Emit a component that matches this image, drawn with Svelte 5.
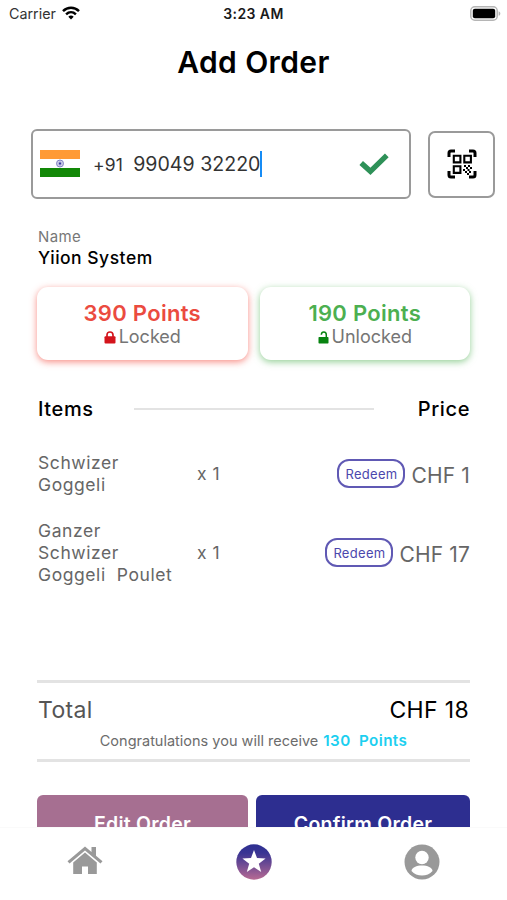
<script lang="ts">
	type OrderItem = {
		lines: string[];
		quantity: number;
		price: number;
	};

	const items: OrderItem[] = [
		{ lines: ['Schwizer', 'Goggeli'], quantity: 1, price: 1 },
		{ lines: ['Ganzer', 'Schwizer', 'Goggeli  Poulet'], quantity: 1, price: 17 }
	];

	const total = items.reduce((sum, item) => sum + item.price * item.quantity, 0);
	const earnedPoints = 130;
	const spokes = Array.from({ length: 12 }, (_, i) => i * 15);
</script>

<div class="screen">
	<header class="status-bar">
		<div class="carrier">
			<span>Carrier</span>
			<svg width="18" height="14" viewBox="0 0 18 14" fill="none" stroke="#000" stroke-width="2.5">
				<path d="M1 5.1C5.6.6 12.4.6 17 5.1" />
				<path d="M4.1 8.3c2.9-2.7 6.9-2.7 9.8 0" />
				<path d="M6.3 10.7c1.6-1.5 3.8-1.5 5.4 0L9 13.6z" fill="#000" stroke="none" />
			</svg>
		</div>
		<span class="clock">3:23 AM</span>
		<svg class="battery" width="31" height="15" viewBox="0 0 31 15">
			<rect x=".8" y=".8" width="26.4" height="13.4" rx="4" fill="#fff" stroke="#b5b5b5" stroke-width="1.5" />
			<rect x="2.8" y="2.8" width="22.4" height="9.4" rx="2" fill="#000" />
			<path d="M28.6 5.2c2.3.8 2.3 3.8 0 4.6z" fill="#b5b5b5" />
		</svg>
	</header>

	<main class="content">
		<h1>Add Order</h1>

		<div class="phone-row">
			<div class="phone-input">
				<svg class="flag" width="40" height="27" viewBox="0 0 40 27">
					<rect width="40" height="27" fill="#fff" />
					<rect width="40" height="9" fill="#ff9a35" />
					<rect y="18" width="40" height="9" fill="#128807" />
					<g stroke="#6b6bb8" fill="none">
						<circle cx="20" cy="13.5" r="3.5" stroke-width=".8" />
						{#each spokes as angle}
							<path d="M20 10v7" stroke-width=".25" transform={`rotate(${angle} 20 13.5)`} />
						{/each}
					</g>
					<circle cx="20" cy="13.5" r="1" fill="#33339a" />
				</svg>
				<span class="code">+91</span>
				<span class="number">99049 32220</span>
				<span class="caret"></span>
				<svg class="check" width="30" height="24" viewBox="0 0 30 24">
					<path d="M2.2 11l9.2 8.300L27.800 3.300" fill="none" stroke="#2e9158" stroke-width="5.3" />
				</svg>
			</div>
			<button class="scan" aria-label="Scan QR code">
				<svg width="30" height="30" viewBox="0 0 30 30" fill="none" stroke="#000">
					<path d="M2 8V4q0-2 2-2h4M22 2h4q2 0 2 2v4M28 22v4q0 2-2 2h-4M8 28H4q-2 0-2-2v-4" stroke-width="3" />
					<path d="M6.8 6.8h6.6v6.6H6.8zM17.3 6.8h6.6v6.6h-6.6zM6.8 17.3h6.6v6.6H6.8z" stroke-width="2.1" />
					<path
						d="M17 16h2v2h-2zM21 16h2v2h-2zM19 18h2v2h-2zM23 18h2v2h-2zM16 20h2v2h-2zM20.5 20h2v2h-2zM18 22h2v2h-2zM22 22h2v2h-2zM20 24h2v2h-2z"
						fill="#000"
						stroke="none"
					/>
				</svg>
			</button>
		</div>

		<section class="customer">
			<span class="label">Name</span>
			<strong>Yiion System</strong>
		</section>

		<section class="points">
			<div class="card locked">
				<strong>390 Points</strong>
				<span>
					<svg width="12" height="13" viewBox="0 0 12 13">
						<path d="M3 6V4q0-3 3-3t3 3v2" fill="none" stroke="#d4141c" stroke-width="1.7" />
						<rect x=".5" y="5.3" width="11" height="7.2" rx="1" fill="#d4141c" />
					</svg>
					Locked
				</span>
			</div>
			<div class="card unlocked">
				<strong>190 Points</strong>
				<span>
					<svg width="11" height="13" viewBox="0 0 11 13">
						<path d="M3.3 3.8Q3.5 1 5.8 1q2.500 0 2.500 3v2" fill="none" stroke="#078310" stroke-width="1.5" />
						<rect x=".5" y="6" width="10" height="6.500" rx=".7" fill="#078310" />
					</svg>
					Unlocked
				</span>
			</div>
		</section>

		<div class="items-header">
			<span class="items-title">Items</span>
			<span class="rule"></span>
			<span class="price-title">Price</span>
		</div>

		<ul class="items">
			{#each items as item}
				<li>
					<div class="item-name">
						{#each item.lines as line}
							<span>{line}</span>
						{/each}
					</div>
					<span class="quantity">x {item.quantity}</span>
					<button class="redeem">Redeem</button>
					<span class="price">CHF {item.price}</span>
				</li>
			{/each}
		</ul>

		<section class="summary">
			<div class="total">
				<span class="total-label">Total</span>
				<span class="total-price">CHF {total}</span>
			</div>
			<p>
				<span>Congratulations you will receive</span>
				<b>{earnedPoints}&nbsp; Points</b>
			</p>
		</section>

		<div class="actions">
			<button class="edit">Edit Order</button>
			<button class="confirm">Confirm Order</button>
		</div>
	</main>

	<nav class="tab-bar">
		<svg width="36" height="29" viewBox="0 0 36 29" fill="#999">
			<path d="M18 .5l6.500 5.500V1h4.500v8.800l6.500 5.500-2 2.300L18 4.600 2.500 17.600l-2-2.300z" />
			<path d="M18 6.500L6.200 16.400V28h8.800v-7.500h6V28h8.800V16.400z" />
		</svg>
		<svg width="36" height="36" viewBox="0 0 36 36">
			<defs>
				<linearGradient id="star-fill" x1="0" y1="0" x2="0" y2="1">
					<stop offset="0" stop-color="#2d2f91" />
					<stop offset=".25" stop-color="#393493" />
					<stop offset="1" stop-color="#b76a93" />
				</linearGradient>
			</defs>
			<circle cx="18" cy="18" r="17.7" fill="url(#star-fill)" />
			<path d="M18 6l3 8.100 8.600.3-6.800 5.300 2.400 8.300L18 23.200l-7.200 4.800 2.400-8.300-6.800-5.300 8.600-.3z" fill="#fff" />
		</svg>
		<svg width="36" height="36" viewBox="0 0 36 36">
			<circle cx="18" cy="18" r="17.5" fill="#999" />
			<circle cx="18" cy="13.5" r="6.7" fill="#fff" />
			<path d="M7.5 27c0-7.500 21-7.500 21 0-5 6-16 6-21 0z" fill="#fff" />
		</svg>
	</nav>
</div>

<style>
	:global(body) {
		background: #fff;
	}
	.screen {
		display: flex;
		flex-direction: column;
		width: 507px;
		height: 900px;
		overflow: hidden;
		background: #fff;
		color: #000;
		font-family: Inter, 'Liberation Sans', sans-serif;
	}
	.screen * {
		box-sizing: border-box;
	}
	svg {
		display: block;
		flex: none;
	}
	button {
		border: 0;
		padding: 0;
		font-family: inherit;
	}
	.status-bar {
		display: grid;
		grid-template-columns: 1fr auto 1fr;
		align-items: center;
		flex: none;
		height: 27px;
		padding: 0 6px 0 9px;
		white-space: nowrap;
	}
	.carrier {
		display: flex;
		align-items: center;
		gap: 6px;
		font-size: 14.3px;
		color: #333;
	}
	.carrier svg {
		margin-top: -2px;
	}
	.clock {
		margin-right: 3px;
		font-size: 14px;
		font-weight: 600;
		letter-spacing: 0.4px;
		color: #1a1a1a;
	}
	.battery {
		justify-self: end;
	}
	.content {
		flex: 1;
		min-height: 0;
		overflow: hidden;
	}
	h1 {
		height: 70px;
		margin: 0 0 32px;
		line-height: 70px;
		font-size: 30px;
		font-weight: 600;
		letter-spacing: 0.4px;
		text-align: center;
	}
	.phone-row {
		display: flex;
		align-items: center;
		justify-content: space-between;
		padding: 0 12px 0 31px;
	}
	.phone-input {
		display: flex;
		align-items: center;
		width: 380px;
		height: 70px;
		padding: 0 20px 0 7px;
		border: 2px solid #9a9a9a;
		border-radius: 6px;
		color: #333;
		white-space: nowrap;
	}
	.flag {
		margin-top: -1px;
	}
	.code {
		margin-left: 13px;
		font-size: 17.5px;
		letter-spacing: 0.2px;
	}
	.number {
		margin: 0 0 1px 10px;
		font-size: 19.6px;
	}
	.caret {
		width: 2px;
		height: 26px;
		background: #168cf5;
	}
	.check {
		margin-left: auto;
	}
	.scan {
		display: grid;
		place-items: center;
		width: 67px;
		height: 67px;
		border: 2px solid #9a9a9a;
		border-radius: 7px;
		background: #fff;
	}
	.customer {
		display: flex;
		flex-direction: column;
		padding: 28px 38px 0;
	}
	.label {
		line-height: 20px;
		font-size: 15px;
		letter-spacing: 0.4px;
		color: #777;
	}
	.customer strong {
		line-height: 22px;
		font-size: 17.5px;
		font-weight: 500;
		letter-spacing: 0.5px;
	}
	.points {
		display: grid;
		grid-template-columns: 1fr 1fr;
		gap: 12px;
		margin-top: 18px;
		padding: 0 37px;
	}
	.card {
		display: flex;
		flex-direction: column;
		align-items: center;
		height: 73px;
		padding-top: 12px;
		border-radius: 11px;
		background: #fff;
	}
	.card strong {
		line-height: 28px;
		font-size: 22px;
		font-weight: 600;
		letter-spacing: 0.3px;
	}
	.card span {
		display: flex;
		align-items: center;
		gap: 3px;
		line-height: 20px;
		font-size: 18px;
		color: #757575;
	}
	.locked {
		box-shadow: 0 2px 7px rgba(244, 67, 54, 0.6);
	}
	.locked strong {
		color: #eb4b3f;
	}
	.unlocked {
		box-shadow: 0 2px 7px rgba(76, 175, 80, 0.6);
	}
	.unlocked strong {
		color: #4caf50;
	}
	.items-header {
		display: flex;
		align-items: center;
		height: 30px;
		margin: 34px 37px 0 38px;
		font-size: 20px;
		font-weight: 500;
		letter-spacing: 0.6px;
	}
	.items-title {
		width: 96px;
	}
	.rule {
		width: 240px;
		height: 2px;
		background: #e3e3e3;
	}
	.price-title {
		margin-left: auto;
	}
	.items {
		height: 256px;
		margin: 0;
		padding: 28px 37px 0 38px;
		list-style: none;
	}
	.items li {
		display: flex;
		align-items: center;
		margin-bottom: 24px;
		color: #666;
	}
	.item-name {
		display: flex;
		flex-direction: column;
		width: 159px;
		line-height: 22px;
		font-size: 17.5px;
		letter-spacing: 0.58px;
		white-space: pre;
	}
	.quantity {
		margin-top: -2px;
		font-size: 17.5px;
		letter-spacing: 0.5px;
	}
	.redeem {
		width: 68px;
		height: 29px;
		margin: -1px 0 0 auto;
		border: 2px solid #6059b4;
		border-radius: 12px;
		background: #fff;
		font-size: 13px;
		letter-spacing: 0.3px;
		color: #4b47ad;
	}
	.price {
		margin: 3px 0 0 6px;
		font-size: 21px;
		letter-spacing: 0.15px;
	}
	.summary {
		height: 82px;
		margin: 0 37px;
		border: solid #e3e3e3;
		border-width: 3px 0;
	}
	.total {
		display: flex;
		justify-content: space-between;
		height: 54px;
		padding: 0 1px 0 1px;
		line-height: 54px;
		font-size: 23px;
		letter-spacing: 0.35px;
	}
	.total-label {
		color: #555;
	}
	.summary p {
		display: flex;
		justify-content: center;
		gap: 5px;
		margin: -6px 0 0;
		line-height: 20px;
		font-size: 14.5px;
		color: #6c6c6c;
		white-space: nowrap;
	}
	.summary b {
		font-size: 15.2px;
		font-weight: 600;
		letter-spacing: 0.4px;
		color: #1ccff0;
	}
	.actions {
		display: grid;
		grid-template-columns: 211px 1fr;
		gap: 8px;
		margin-top: 33px;
		padding: 0 37px;
	}
	.actions button {
		height: 57px;
		border-radius: 6px;
		font-size: 19.5px;
		font-weight: 600;
		letter-spacing: 0.25px;
		color: #fff;
	}
	.edit {
		background: #a66f91;
	}
	.confirm {
		background: #2d2e90;
	}
	.tab-bar {
		display: flex;
		justify-content: space-between;
		flex: none;
		height: 73px;
		padding: 16px 67px 0;
		background: #fff;
		border-top: 1px solid #fafafa;
	}
	.tab-bar svg:first-child {
		margin-top: 2px;
	}
</style>
